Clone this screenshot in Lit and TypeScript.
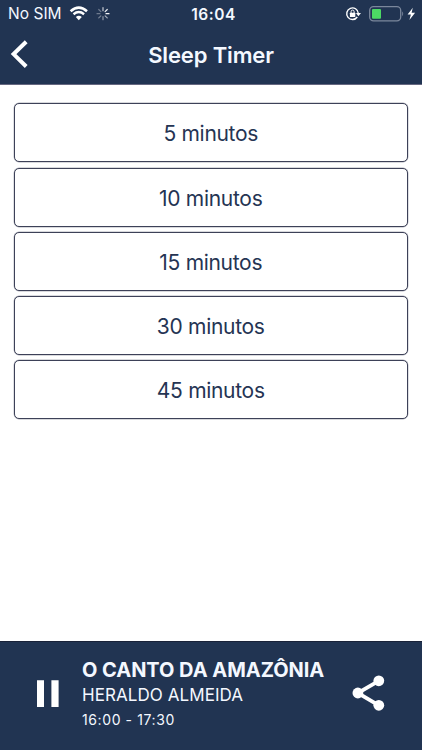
import { LitElement, html, css, svg } from "lit";
import { customElement, property } from "lit/decorators.js";

@customElement("status-bar")
class StatusBar extends LitElement {
  static styles = css`
    :host { display: grid; grid-template-columns: 1fr auto 1fr; align-items: center; height: 28px; color: #f4f8ff; }
    .left { display: flex; align-items: center; padding-left: 8px; }
    .carrier { font-size: 15.5px; line-height: 28px; letter-spacing: 0.03px; width: 61px; height: 28px; white-space: nowrap; }
    .clock { font-size: 15.5px; font-weight: 600; line-height: 27px; letter-spacing: 0.5px; padding: 1px 0 0 5px; }
    .right { display: flex; justify-content: flex-end; }
    svg { display: block; }
  `;
  render() {
    const spokes = [0.95, 0.9, 0.75, 0.35, 0.35, 0.4, 0.5, 0.6];
    return html`
      <div class="left">
        <span class="carrier">No SIM</span>
        <svg width="44" height="28" viewBox="69 0 44 28" fill="none">
          <path d="M70.6 11.2Q78.8 4.2 87 11.2" stroke="#fff" stroke-width="2.6"/>
          <path d="M73.5 14.2Q78.8 9.9 84.1 14.2" stroke="#fff" stroke-width="2.4"/>
          <path d="M75.8 17.1Q78.8 14.5 81.8 17.1L78.8 20.2Z" fill="#fff"/>
          ${spokes.map((o, i) => svg`<path d="M106 13.7H109" transform="rotate(${i * -45} 103 13.7)" stroke="#fff" stroke-width="1.2" stroke-linecap="round" opacity=${o}/>`)}
        </svg>
      </div>
      <span class="clock">16:04</span>
      <div class="right">
        <svg width="82" height="28" viewBox="340 0 82 28" fill="none">
          <path d="M357.3 17A5.8 5.8 0 1 1 358.3 13.2" stroke="#fff" stroke-width="1.4"/>
          <path d="M355.9 12.9H361L358.4 16.2Z" fill="#fff"/>
          <rect x="349.9" y="12.7" width="5.4" height="4.4" rx=".5" fill="#fff"/>
          <path d="M351.1 13V11.6a1.5 1.5 0 0 1 3 0V13" stroke="#fff" stroke-width="1"/>
          <rect x="369.7" y="6.7" width="31" height="14.2" rx="3.8" stroke="#7b879c" stroke-width="1.3"/>
          <rect x="372" y="9" width="9" height="9.7" rx="1" fill="#4cd964"/>
          <path d="M402.2 11.3Q404.2 13.8 402.2 16.3Z" fill="#7b879c"/>
          <path d="M412.8 7.7L407.6 14.4H410.9L409.4 20L415.1 12.7H411.6Z" fill="#fff"/>
        </svg>
      </div>`;
  }
}

@customElement("nav-header")
class NavHeader extends LitElement {
  @property() heading = "";
  static styles = css`
    :host { display: grid; grid-template-columns: 40px 1fr 40px; align-items: start; height: 56px; color: #f4f8ff; }
    h1 { margin: 0; text-align: center; font-size: 22px; font-weight: 600; line-height: 54px; letter-spacing: -0.14px; }
    svg { display: block; }
  `;
  render() {
    return html`
      <svg width="40" height="56" viewBox="0 28 40 56" fill="none"><path d="M26.2 41.7L13.6 54.1L26.2 66.5" stroke="#fff" stroke-width="4"/></svg>
      <h1>${this.heading}</h1>`;
  }
}

@customElement("timer-option")
class TimerOption extends LitElement {
  @property() label = "";
  static styles = css`
    :host { display: block; }
    button { display: block; width: 100%; height: 59px; margin: 0; padding: 1px 0 0; box-sizing: border-box; border: 1px solid #3d4158; border-radius: 5px; box-shadow: 0 0 0 0.4px #3d415866; background: #fff; color: #253453; font: 400 21px/57px Inter, sans-serif; letter-spacing: -0.3px; }
  `;
  render() {
    return html`<button>${this.label}</button>`;
  }
}

@customElement("player-bar")
class PlayerBar extends LitElement {
  static styles = css`
    :host { display: grid; grid-template-columns: 82px 1fr 82px; height: 109px; box-sizing: border-box; border-top: 1px solid #192238; background: #213452; color: #f4f8ff; }
    .info { padding-top: 14px; white-space: nowrap; }
    .title { font-size: 20px; line-height: 29px; font-weight: 700; letter-spacing: -0.04px; }
    .host { font-size: 17px; line-height: 21px; font-weight: 400; letter-spacing: 0.07px; }
    .time { font-size: 14px; line-height: 27px; letter-spacing: 0.6px; }
    svg { display: block; }
  `;
  render() {
    return html`
      <svg width="82" height="108" viewBox="0 642 82 108"><path d="M37 680.2H44V707H37ZM51.4 680.2H58.6V707H51.4Z" fill="#fff"/></svg>
      <div class="info">
        <div class="title">O CANTO DA AMAZÔNIA</div>
        <div class="host">HERALDO ALMEIDA</div>
        <div class="time">16:00 - 17:30</div>
      </div>
      <svg width="82" height="108" viewBox="340 642 82 108" fill="#fff">
        <path d="M378.8 680.8L357.8 693L378.8 705.3" fill="none" stroke="#fff" stroke-width="3.8"/>
        <circle cx="378.8" cy="680.8" r="5.4"/><circle cx="357.9" cy="693" r="5.4"/><circle cx="378.8" cy="705.3" r="5.4"/>
      </svg>`;
  }
}

@customElement("app-root")
class AppRoot extends LitElement {
  static styles = css`
    :host { display: flex; flex-direction: column; height: 750px; background: #fff; font-family: Inter, sans-serif; overflow: hidden; }
    header { background: #213452; height: 85px; border-bottom: 1px solid #656780; box-sizing: border-box; flex: none; }
    main { flex: 1; display: flex; flex-direction: column; gap: 5.3px; padding: 18.3px 14px 0 13.5px; }
  `;
  render() {
    return html`
      <header><status-bar></status-bar><nav-header heading="Sleep Timer"></nav-header></header>
      <main>${[5, 10, 15, 30, 45].map((m) => html`<timer-option label="${m} minutos"></timer-option>`)}</main>
      <player-bar></player-bar>`;
  }
}
